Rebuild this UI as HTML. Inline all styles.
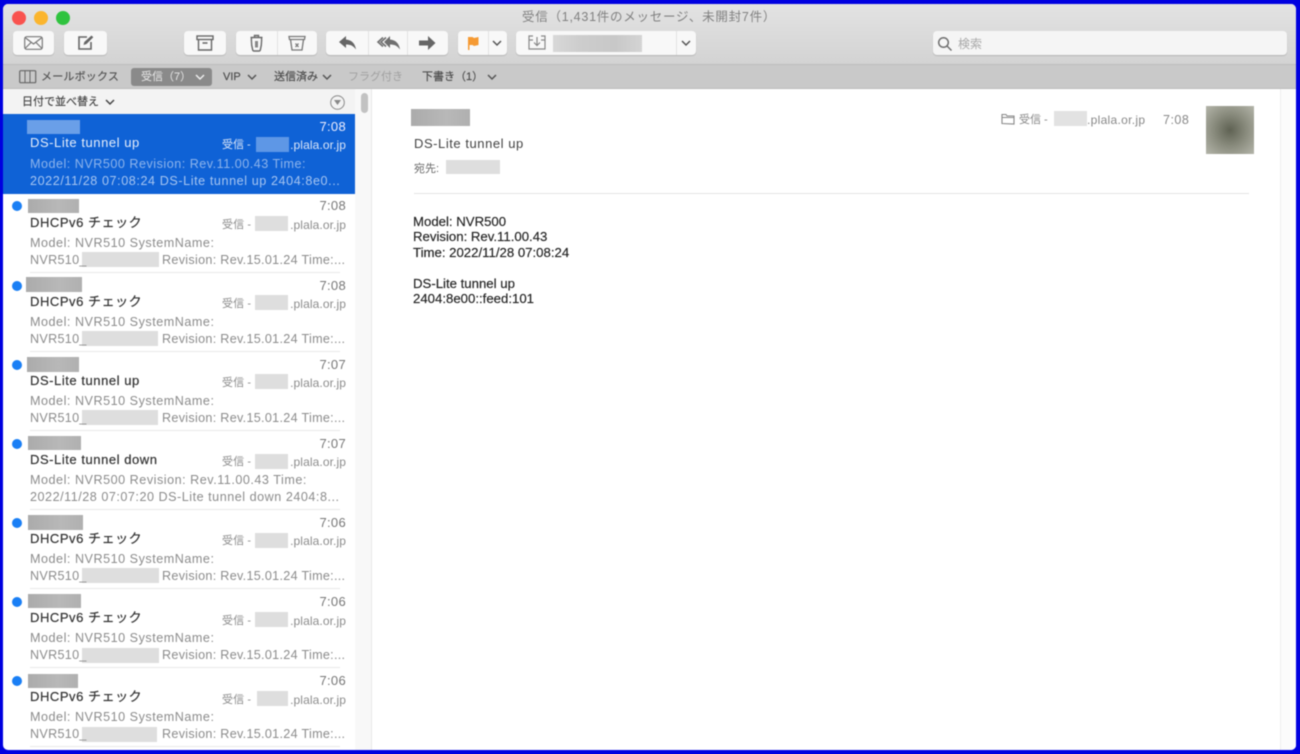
<!DOCTYPE html>
<html lang="ja"><head><meta charset="utf-8"><title>受信</title>
<style>
html,body{margin:0;padding:0;width:1300px;height:754px;overflow:hidden;background:#0000e0}
body{position:relative;font-family:"Liberation Sans","Noto Sans CJK JP",sans-serif}
#w{position:absolute;left:3px;top:4px;width:1293px;height:746px;border-radius:5px;overflow:hidden;background:#fff;filter:blur(.6px)}
#c{position:absolute;left:-3px;top:-4px;width:1300px;height:754px}
#c div,#c svg,#c span.a{position:absolute}
.tb{left:0;top:0;width:1300px;height:65px;background:linear-gradient(#e4e4e4,#d3d3d3);border-bottom:1px solid #bdbdbd;box-sizing:border-box}
.tabs{left:0;top:65px;width:1300px;height:24px;background:#c9c9c9;border-bottom:1px solid #bbb;box-sizing:border-box}
.btn{height:24px;top:31px;background:#f8f8f8;border-radius:4px;box-shadow:0 1px 1px #b5b5b5}
.sep{top:31px;width:1px;height:24px;background:#e2e2e2}
.t{white-space:nowrap;line-height:16px}
.bk{background:linear-gradient(90deg,#ababab,#b8b8b8 60%,#b0b0b0)}
.lt{background:#dedede}
.row .t{color:#8e8e8e}
.s{font-size:13px;letter-spacing:.55px;color:#333!important;left:30px;transform:translateY(1px);-webkit-text-stroke:.2px #333}
.m{font-size:11px;left:222px;width:125px;color:#8c8c8c!important;letter-spacing:.1px;transform:translateY(1px)}
.p{font-size:12.6px;left:30px;letter-spacing:.52px;color:#8c8c8c!important;transform:translateY(1px)}
.r{letter-spacing:.3px}
.tm{font-size:13px;right:9px;color:#777!important;letter-spacing:.3px;transform:translateY(1px)}
.u{font-size:12px!important;letter-spacing:.1px!important;color:#8c8c8c!important}
.d{left:12px;width:10px;height:10px;border-radius:50%;background:#1a7ff5}
.ln{left:30px;top:78px;width:310px;height:1px;background:#e8e8e8}
.tab{font-size:11px;top:69px;color:#4a4a4a;-webkit-text-stroke:.15px #4a4a4a}
</style></head><body>
<div id="w"><div id="c">
<div class="tb"></div><div class="tabs"></div>

<div class="t" style="left:522px;top:9px;font-size:12.5px;color:#808080;letter-spacing:.75px">受信（1,431件のメッセージ、未開封7件）</div>
<div style="left:12px;top:11px;width:14px;height:14px;border-radius:50%;background:#f9524e"></div>
<div style="left:34px;top:11px;width:14px;height:14px;border-radius:50%;background:#fbb52d"></div>
<div style="left:56px;top:11px;width:14px;height:14px;border-radius:50%;background:#2fc33e"></div>

<div class="btn" style="left:13px;width:41px"></div>
<svg style="left:24px;top:36px" width="19" height="14" fill="none" stroke="#777" stroke-width="1.200"><rect x=".7" y=".7" width="17.600" height="12.600" rx="2"/><path d="M1 1.500l8.500 6.500 8.500-6.500M1 12.500l6-6M18 12.500l-6-6"/></svg>
<div class="btn" style="left:64px;width:43px"></div>
<svg style="left:77px;top:34px" width="18" height="17" fill="none" stroke="#666" stroke-width="1.600"><path d="M10 3H2v12h12V8"/><path d="M6.500 11l.8-3L14.500 1.500l1.800 1.800L9.500 10z" fill="#666" stroke="none"/></svg>
<div class="btn" style="left:184px;width:42px"></div>
<svg style="left:196px;top:35px" width="18" height="16" fill="none" stroke="#666" stroke-width="1.400"><rect x="1" y="1" width="16" height="3.500"/><path d="M2.500 4.500V15h13V4.500M6.500 8h5"/></svg>
<div class="btn" style="left:236px;width:81px"></div><div class="sep" style="left:277px"></div>
<svg style="left:249px;top:34px" width="15" height="18" fill="none" stroke="#6a6a6a" stroke-width="1.400"><path d="M1.500 3.500h12M5.500 3V1.500h4V3"/><path d="M2.500 3.500c-.3 4 .2 9 1.200 12.500.2.600.5 1 1.300 1h5c.8 0 1.100-.4 1.300-1 1-3.500 1.500-8.500 1.200-12.500"/><rect x="6" y="7" width="3" height="6.500" fill="#888" stroke="none"/></svg>
<svg style="left:288px;top:35px" width="18" height="16" fill="none" stroke="#777" stroke-width="1.300"><path d="M1 1.500h16l-.5 3H1.500zM2.500 4.500l1.500 10.500h10l1.500-10.500M7.500 8.500l3 3.500M10.500 8.500l-3 3.500"/></svg>
<div class="btn" style="left:326px;width:122px"></div><div class="sep" style="left:368px"></div><div class="sep" style="left:407px"></div>
<svg style="left:338px;top:35px" width="20" height="16" fill="#666"><path d="M8 1L1 7l7 6V9.500c4 0 7 .8 10 5-.8-5.500-4-9.500-10-10z"/></svg>
<svg style="left:376px;top:35px" width="25" height="16" fill="#707070"><path d="M14 1L8 7l6 6V9.500c4 0 7 .8 10 5-.8-5.500-4-9.500-10-10z"/><path d="M7 2.500L2 7l5 4.500M10 2.500L5 7l5 4.500" fill="none" stroke="#707070" stroke-width="1.600"/></svg>
<svg style="left:418px;top:36px" width="18" height="14" fill="#666"><path d="M10 0l7.500 7-7.500 7v-4.500H1v-5h9z"/></svg>
<div class="btn" style="left:458px;width:49px"></div><div class="sep" style="left:488px"></div>
<svg style="left:467px;top:37px" width="13" height="13" fill="#f59a33"><path d="M1 0h4.500l1.500 1 4.500-1v8l-4.500 1-1.500-1H2.500v5H1z"/></svg>
<svg class="ch" style="left:492px;top:40px" width="10" height="7" fill="none" stroke="#555" stroke-width="1.500"><path d="M1 1l4 4 4-4"/></svg>
<div class="btn" style="left:516px;width:180px"></div><div class="sep" style="left:676px"></div>
<svg style="left:528px;top:35px" width="18" height="15" fill="none" stroke="#888" stroke-width="1.200"><path d="M5 1H1v13h16V1h-4M9 2v8M6 7.500l3 3 3-3M1 5h4M13 5h4"/></svg>
<div class="lt" style="left:553px;top:35px;width:89px;height:17px;background:linear-gradient(90deg,#d8d8d8,#cdcdcd 30%,#c8c8c8 70%,#d4d4d4)"></div>
<svg style="left:681px;top:40px" width="10" height="7" fill="none" stroke="#555" stroke-width="1.500"><path d="M1 1l4 4 4-4"/></svg>

<div class="btn" style="left:933px;top:31px;width:354px;background:#f5f5f5"></div>
<svg style="left:937px;top:36px" width="16" height="16" fill="none" stroke="#707070" stroke-width="1.500"><circle cx="6.500" cy="6.500" r="4.800"/><path d="M10 10l4.500 4.500"/></svg>
<div class="t" style="left:958px;top:36px;font-size:12px;color:#a8a8a8">検索</div>

<!-- tab bar -->
<svg style="left:19px;top:70px" width="18" height="14" fill="none" stroke="#666" stroke-width="1.200"><rect x=".7" y=".7" width="16" height="12" rx="1"/><path d="M6 1v12M11 1v12" stroke-width="1"/></svg>
<div class="t tab" style="left:41px;color:#555;letter-spacing:.2px">メールボックス</div>
<div style="left:131px;top:68px;width:81px;height:18px;border-radius:3px;background:#8a8a8a"></div>
<div class="t tab" style="left:141px;color:#e8e8e8;-webkit-text-stroke:0">受信（7）</div>
<svg style="left:195px;top:74px" width="10" height="7" fill="none" stroke="#eee" stroke-width="1.500"><path d="M1 1l4 4 4-4"/></svg>
<div class="t tab" style="left:223px">VIP</div>
<svg style="left:247px;top:74px" width="10" height="7" fill="none" stroke="#555" stroke-width="1.500"><path d="M1 1l4 4 4-4"/></svg>
<div class="t tab" style="left:274px">送信済み</div>
<svg style="left:322px;top:74px" width="10" height="7" fill="none" stroke="#555" stroke-width="1.500"><path d="M1 1l4 4 4-4"/></svg>
<div class="t tab" style="left:348px;color:#a0a0a0;-webkit-text-stroke:0">フラグ付き</div>
<div class="t tab" style="left:422px">下書き（1）</div>
<svg style="left:487px;top:74px" width="10" height="7" fill="none" stroke="#555" stroke-width="1.500"><path d="M1 1l4 4 4-4"/></svg>

<!-- list -->
<div style="left:0;top:89px;width:355px;height:25px;background:#f3f3f3"></div>
<div class="t" style="left:22px;top:94px;font-size:11px;color:#444;-webkit-text-stroke:.15px #444">日付で並べ替え</div>
<svg style="left:105px;top:99px" width="10" height="7" fill="none" stroke="#444" stroke-width="1.500"><path d="M1 1l4 4 4-4"/></svg>
<svg style="left:330px;top:95px" width="15" height="15" fill="none" stroke="#888" stroke-width="1"><circle cx="7.500" cy="7.500" r="6.800"/><path d="M4 5h7l-3.500 5z" fill="#888" stroke="none"/></svg>
<div style="left:355px;top:89px;width:17px;height:665px;background:#f8f8f8;border-right:1px solid #e8e8e8;box-sizing:border-box"></div>
<div style="left:361px;top:93px;width:7px;height:20px;border-radius:4px;background:#c2c2c2"></div>
<div style="left:1280px;top:89px;width:20px;height:665px;background:#fbfbfb;border-left:1px solid #eee;box-sizing:border-box"></div>

<!-- selected -->
<div style="left:0;top:114px;width:355px;height:80px;background:#0f62d6"></div>
<div style="left:27px;top:120px;width:53px;height:14px;background:#6a9fe8"></div>
<div class="t" style="right:954px;top:119px;font-size:13px;color:#eef;letter-spacing:.3px">7:08</div>
<div class="t" style="left:30px;top:135px;font-size:13px;letter-spacing:.55px;color:#e6eefb">DS-Lite tunnel up</div>
<div class="t" style="left:222px;top:137px;font-size:11px;color:#dbe6f8">受信 -</div>
<div style="left:256px;top:137px;width:33px;height:15px;background:#5e97e6"></div>
<div class="t" style="right:954px;top:137px;font-size:12px;color:#dbe6f8;letter-spacing:.1px">.plala.or.jp</div>
<div class="t" style="left:30px;top:156px;font-size:12.6px;letter-spacing:.5px;color:#8db4ec">Model: NVR500 Revision: Rev.11.00.43 Time:</div>
<div class="t" style="left:30px;top:173px;font-size:12.6px;letter-spacing:.58px;color:#a6c5f1">2022/11/28 07:08:24 DS-Lite tunnel up 2404:8e0...</div>

<!-- rows -->
<div class="row" style="left:0;top:194px;width:355px;height:79px">
<div class="d" style="top:7px"></div><div class="bk" style="left:28px;top:5px;width:51px;height:14px"></div>
<div class="t tm" style="top:3px">7:08</div><div class="t s" style="top:20px">DHCPv6 チェック</div>
<div class="t m" style="top:22px">受信 -</div><div class="lt" style="left:255px;top:22px;width:33px;height:15px"></div><div class="t tm u" style="top:22px">.plala.or.jp</div>
<div class="t p" style="top:40px">Model: NVR510 SystemName:</div><div class="lt" style="left:82px;top:58px;width:77px;height:15px"></div><div class="t p r" style="top:57px">NVR510_</div><div class="t p r" style="left:162px;top:57px">Revision: Rev.15.01.24 Time:...</div><div class="ln"></div></div>

<div class="row" style="left:0;top:273px;width:355px;height:79px">
<div class="d" style="top:8px"></div><div class="bk" style="left:26px;top:4px;width:56px;height:15px"></div>
<div class="t tm" style="top:4px">7:08</div><div class="t s" style="top:20px">DHCPv6 チェック</div>
<div class="t m" style="top:22px">受信 -</div><div class="lt" style="left:255px;top:22px;width:33px;height:15px"></div><div class="t tm u" style="top:22px">.plala.or.jp</div>
<div class="t p" style="top:40px">Model: NVR510 SystemName:</div><div class="lt" style="left:82px;top:58px;width:76px;height:15px"></div><div class="t p r" style="top:57px">NVR510_</div><div class="t p r" style="left:162px;top:57px">Revision: Rev.15.01.24 Time:...</div><div class="ln"></div></div>

<div class="row" style="left:0;top:352px;width:355px;height:79px">
<div class="d" style="top:8px"></div><div class="bk" style="left:27px;top:5px;width:52px;height:15px"></div>
<div class="t tm" style="top:4px">7:07</div><div class="t s" style="top:20px">DS-Lite tunnel up</div>
<div class="t m" style="top:22px">受信 -</div><div class="lt" style="left:255px;top:22px;width:33px;height:15px"></div><div class="t tm u" style="top:22px">.plala.or.jp</div>
<div class="t p" style="top:40px">Model: NVR510 SystemName:</div><div class="lt" style="left:82px;top:58px;width:76px;height:15px"></div><div class="t p r" style="top:57px">NVR510_</div><div class="t p r" style="left:162px;top:57px">Revision: Rev.15.01.24 Time:...</div><div class="ln"></div></div>

<div class="row" style="left:0;top:431px;width:355px;height:79px">
<div class="d" style="top:8px"></div><div class="bk" style="left:28px;top:5px;width:53px;height:14px"></div>
<div class="t tm" style="top:4px">7:07</div><div class="t s" style="top:20px">DS-Lite tunnel down</div>
<div class="t m" style="top:22px">受信 -</div><div class="lt" style="left:255px;top:23px;width:33px;height:15px"></div><div class="t tm u" style="top:22px">.plala.or.jp</div>
<div class="t p" style="top:40px">Model: NVR500 Revision: Rev.11.00.43 Time:</div><div class="t p" style="top:57px">2022/11/28 07:07:20 DS-Lite tunnel down 2404:8...</div><div class="ln"></div></div>

<div class="row" style="left:0;top:510px;width:355px;height:79px">
<div class="d" style="top:8px"></div><div class="bk" style="left:28px;top:5px;width:55px;height:15px"></div>
<div class="t tm" style="top:4px">7:06</div><div class="t s" style="top:20px">DHCPv6 チェック</div>
<div class="t m" style="top:22px">受信 -</div><div class="lt" style="left:255px;top:23px;width:33px;height:15px"></div><div class="t tm u" style="top:22px">.plala.or.jp</div>
<div class="t p" style="top:40px">Model: NVR510 SystemName:</div><div class="lt" style="left:82px;top:58px;width:77px;height:15px"></div><div class="t p r" style="top:57px">NVR510_</div><div class="t p r" style="left:162px;top:57px">Revision: Rev.15.01.24 Time:...</div><div class="ln"></div></div>

<div class="row" style="left:0;top:589px;width:355px;height:79px">
<div class="d" style="top:8px"></div><div class="bk" style="left:28px;top:5px;width:53px;height:14px"></div>
<div class="t tm" style="top:4px">7:06</div><div class="t s" style="top:20px">DHCPv6 チェック</div>
<div class="t m" style="top:23px">受信 -</div><div class="lt" style="left:255px;top:23px;width:33px;height:15px"></div><div class="t tm u" style="top:23px">.plala.or.jp</div>
<div class="t p" style="top:40px">Model: NVR510 SystemName:</div><div class="lt" style="left:82px;top:59px;width:77px;height:15px"></div><div class="t p r" style="top:57px">NVR510_</div><div class="t p r" style="left:162px;top:57px">Revision: Rev.15.01.24 Time:...</div><div class="ln"></div></div>

<div class="row" style="left:0;top:668px;width:355px;height:86px">
<div class="d" style="top:8px"></div><div class="bk" style="left:28px;top:6px;width:50px;height:14px"></div>
<div class="t tm" style="top:4px">7:06</div><div class="t s" style="top:20px">DHCPv6 チェック</div>
<div class="t m" style="top:23px">受信 -</div><div class="lt" style="left:257px;top:23px;width:31px;height:15px"></div><div class="t tm u" style="top:23px">.plala.or.jp</div>
<div class="t p" style="top:40px">Model: NVR510 SystemName:</div><div class="lt" style="left:82px;top:59px;width:75px;height:15px"></div><div class="t p r" style="top:57px">NVR510_</div><div class="t p r" style="left:162px;top:57px">Revision: Rev.15.01.24 Time:...</div><div class="ln"></div></div>

<!-- detail -->
<div class="bk" style="left:411px;top:109px;width:59px;height:17px"></div>
<div class="t" style="left:414px;top:136px;font-size:13px;color:#444;letter-spacing:.55px">DS-Lite tunnel up</div>
<div class="t" style="left:414px;top:161px;font-size:11px;color:#666">宛先:</div>
<div class="lt" style="left:446px;top:160px;width:54px;height:14px"></div>
<div style="left:414px;top:193px;width:835px;height:1px;background:#e4e4e4"></div>
<svg style="left:1001px;top:113px" width="14" height="12" fill="none" stroke="#888" stroke-width="1.100"><path d="M1 10.500V1.500h4l1 1.500h7v8z"/><path d="M1 4.500h12"/></svg>
<div class="t" style="left:1019px;top:112px;font-size:11px;color:#888">受信 -</div>
<div class="lt" style="left:1054px;top:111px;width:33px;height:15px;background:#e2e2e2"></div>
<div class="t" style="left:1087px;top:112px;font-size:12px;color:#888;letter-spacing:.3px">.plala.or.jp</div>
<div class="t" style="left:1163px;top:112px;font-size:12.5px;color:#888;letter-spacing:.5px">7:08</div>
<div style="left:1206px;top:106px;width:48px;height:48px;background:radial-gradient(circle,#5f6253 0,#8b8d7f 50%,#b4b5aa 100%)"></div>
<div class="t" style="left:413px;top:214px;font-size:13.2px;color:#222;line-height:15.400px;white-space:pre;-webkit-text-stroke:.15px #222">Model: NVR500
Revision: Rev.11.00.43
Time: 2022/11/28 07:08:24

DS-Lite tunnel up
2404:8e00::feed:101</div>
</div></div>
</body></html>
